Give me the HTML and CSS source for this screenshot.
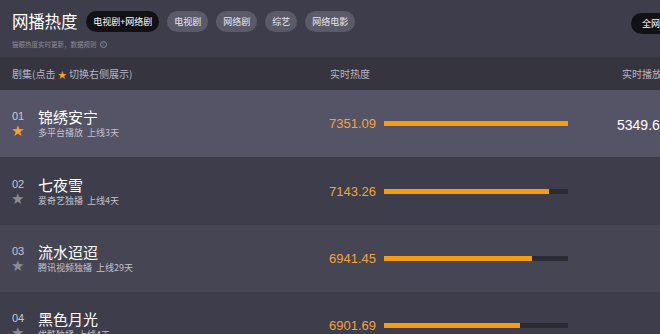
FILE: index.html
```html
<!DOCTYPE html>
<html lang="zh-CN">
<head>
    <meta charset="UTF-8">
    <meta name="viewport" content="width=device-width, initial-scale=1.0">
    <title>网播热度</title>
    <link rel="stylesheet" href="styles.css">
</head>
<body>
    <div class="page">
        <div class="header">
            <div class="topbar">
                <h1 class="title">网播热度</h1>
                <span class="pill active">电视剧+网络剧</span>
                <span class="pill">电视剧</span>
                <span class="pill">网络剧</span>
                <span class="pill">综艺</span>
                <span class="pill">网络电影</span>
                <span class="pill active scope">全网</span>
            </div>
            <div class="note">猫眼热度实时更新，数据规则 <span class="info">i</span></div>
        </div>

        <div class="thead">
            <div>剧集(点击 <span class="mini-star">★</span> 切换右侧展示)</div>
            <div>实时热度</div>
            <div class="play-head">实时播放量</div>
        </div>

        <div class="row selected">
            <div class="show">
                <div class="rank">01<span class="star on">★</span></div>
                <div class="info-col">
                    <div class="name">锦绣安宁</div>
                    <div class="meta">多平台播放&nbsp;&nbsp;上线3天</div>
                </div>
            </div>
            <div class="heat">
                <span class="value">7351.09</span>
                <span class="bar"><span class="fill" style="width: 100%"></span></span>
            </div>
            <div class="play">5349.67万</div>
        </div>

        <div class="row tall">
            <div class="show">
                <div class="rank">02<span class="star">★</span></div>
                <div class="info-col">
                    <div class="name">七夜雪</div>
                    <div class="meta">爱奇艺独播&nbsp;&nbsp;上线4天</div>
                </div>
            </div>
            <div class="heat">
                <span class="value">7143.26</span>
                <span class="bar"><span class="fill" style="width: 89.7%"></span></span>
            </div>
            <div class="play"></div>
        </div>

        <div class="row alt">
            <div class="show">
                <div class="rank">03<span class="star">★</span></div>
                <div class="info-col">
                    <div class="name">流水迢迢</div>
                    <div class="meta">腾讯视频独播&nbsp;&nbsp;上线29天</div>
                </div>
            </div>
            <div class="heat">
                <span class="value">6941.45</span>
                <span class="bar"><span class="fill" style="width: 80.4%"></span></span>
            </div>
            <div class="play"></div>
        </div>

        <div class="row">
            <div class="show">
                <div class="rank">04<span class="star">★</span></div>
                <div class="info-col">
                    <div class="name">黑色月光</div>
                    <div class="meta">优酷独播&nbsp;&nbsp;上线4天</div>
                </div>
            </div>
            <div class="heat">
                <span class="value">6901.69</span>
                <span class="bar"><span class="fill" style="width: 73.9%"></span></span>
            </div>
            <div class="play"></div>
        </div>
    </div>
</body>
</html>
```

FILE: styles.css
```css
* {
    box-sizing: border-box;
}

body, html {
    margin: 0;
    padding: 0;
    background-color: #3e3d4b;
    overflow: hidden;
}

body {
    font-family: "Noto Sans CJK SC", "Noto Sans", sans-serif;
    color: #fff;
}

.page {
    width: 660px;
}

/* Top area with title and tabs */
.header {
    height: 57px;
    padding: 11px 0 0 12px;
}

.topbar {
    display: flex;
    align-items: center;
    gap: 8px;
    height: 21px;
}

.title {
    margin: 0;
    font-size: 16.5px;
    font-weight: normal;
    line-height: 21px;
    letter-spacing: -0.2px;
    margin-right: 1px;
}

.pill {
    height: 21px;
    line-height: 21px;
    padding: 0 7px;
    font-size: 9px;
    border-radius: 11px;
    background: #5b5a69;
    color: #e8e8ee;
    white-space: nowrap;
}

.pill.active {
    background: #111116;
    color: #fff;
}

.pill.scope {
    margin-left: auto;
    margin-top: 3px;
    margin-right: -10px;
    padding: 0 10px 0 11px;
}

.note {
    margin-top: 7px;
    font-size: 6.5px;
    color: #8d8c99;
    display: flex;
    align-items: center;
}

.info {
    display: inline-block;
    width: 7px;
    height: 7px;
    border: 1px solid #8d8c99;
    border-radius: 50%;
    font-size: 5px;
    line-height: 5px;
    text-align: center;
    margin-left: 3px;
    font-family: "Liberation Sans", sans-serif;
}

/* Table header */
.thead {
    display: grid;
    grid-template-columns: 318px 290px 1fr;
    align-items: center;
    height: 33px;
    padding-left: 12px;
    background: #35343f;
    font-size: 10px;
    color: #b7b6c2;
}

.mini-star {
    color: #f5a01e;
    font-size: 9px;
}

.play-head {
    padding-left: 2px;
    white-space: nowrap;
}

/* Rows */
.row {
    display: grid;
    grid-template-columns: 317px 288px 1fr;
    align-items: center;
    height: 67px;
    padding-left: 12px;
    background: #3e3d4b;
}

.row.tall {
    height: 68px;
}

.row.selected {
    background: #555366;
}

.row.alt {
    background: #464553;
}

.show {
    display: flex;
    align-items: center;
}

.rank {
    width: 26px;
    display: flex;
    flex-direction: column;
    font-family: "Liberation Sans", sans-serif;
    font-size: 11px;
    color: #c9c8d2;
    line-height: 14px;
    padding-top: 1px;
}

.star {
    font-size: 15px;
    color: #8b8a97;
    line-height: 16px;
    margin-left: -1px;
    font-family: "DejaVu Sans", sans-serif;
}

.star.on {
    color: #f5a01e;
}

.name {
    font-size: 15px;
    line-height: 18px;
}

.meta {
    font-size: 9px;
    color: #c3c2cc;
    line-height: 12px;
    margin-top: 1px;
}

.heat {
    display: flex;
    align-items: center;
}

.value {
    font-family: "Liberation Sans", sans-serif;
    font-size: 13px;
    color: #f2a33a;
    width: 55px;
}

.bar {
    width: 184px;
    height: 5px;
    background: #2b2a35;
}

.fill {
    display: block;
    height: 100%;
    background: #f59d10;
}

.play {
    font-family: "Liberation Sans", sans-serif;
    font-size: 14px;
    white-space: nowrap;
}
```
